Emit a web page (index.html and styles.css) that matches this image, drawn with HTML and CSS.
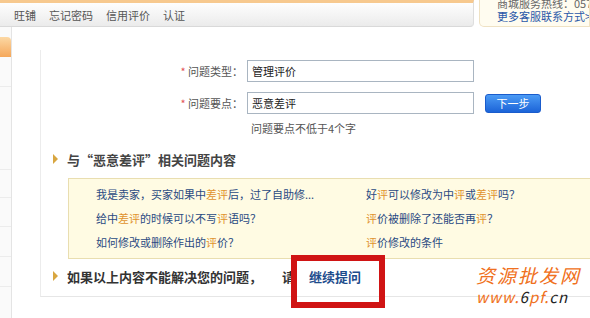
FILE: index.html
```html
<!DOCTYPE html>
<html lang="zh-CN">
<head>
    <meta charset="UTF-8">
    <title>问题提交</title>
    <link rel="stylesheet" href="styles.css">
</head>
<body>
    <div class="top">
        <div class="nav">
            <span>旺铺</span>
            <span>忘记密码</span>
            <span>信用评价</span>
            <span>认证</span>
        </div>
        <div class="service">
            <div class="hotline">商城服务热线：0571</div>
            <a class="more">更多客服联系方式&gt;</a>
        </div>
    </div>

    <div class="wrap">
        <div class="side">
            <div class="tab"></div>
            <div class="side-item h30"></div>
            <div class="side-item h83"></div>
            <div class="side-item h28"></div>
            <div class="side-item h29"></div>
            <div class="side-item h30"></div>
            <div class="side-item h30"></div>
        </div>

        <div class="panel">
            <div class="form">
                <div class="row">
                    <div class="label"><span class="star">*</span> 问题类型：</div>
                    <div class="input">管理评价</div>
                </div>
                <div class="row">
                    <div class="label"><span class="star">*</span> 问题要点：</div>
                    <div class="input">恶意差评</div>
                    <button class="btn">下一步</button>
                </div>
                <div class="hint">问题要点不低于4个字</div>
            </div>

            <div class="title"><i class="arrow"></i>与“恶意差评”相关问题内容</div>

            <div class="faq">
                <a>我是卖家，买家如果中<em>差评</em>后，过了自助修...</a>
                <a>好<em>评</em>可以修改为中<em>评</em>或<em>差评</em>吗？</a>
                <a>给中<em>差评</em>的时候可以不写<em>评</em>语吗？</a>
                <a><em>评</em>价被删除了还能否再<em>评</em>？</a>
                <a>如何修改或删除作出的<em>评</em>价？</a>
                <a><em>评</em>价修改的条件</a>
            </div>

            <div class="title last"><i class="arrow"></i>如果以上内容不能解决您的问题，<span class="please">请</span><a class="ask">继续提问</a></div>
        </div>
    </div>

    <div class="mark"></div>
    <div class="stamp">
        <div class="stamp-cn">资源批发网</div>
        <div class="stamp-url">www.<b>6</b>pf.<b>cn</b></div>
    </div>
</body>
</html>
```

FILE: styles.css
```css
body {
    margin: 0;
    width: 590px;
    height: 318px;
    overflow: hidden;
    position: relative;
    background: #fff;
    font-family: "Noto Sans CJK SC", "Liberation Sans", sans-serif;
    font-size: 11px;
    color: #555;
}

a {
    text-decoration: none;
}

/* top bar */
.top {
    display: flex;
    height: 27px;
}

.nav {
    width: 474px;
    box-sizing: border-box;
    display: flex;
    align-items: center;
    gap: 13px;
    padding-left: 14px;
    border-top: 3px solid #f7c98f;
    border-bottom: 1px solid #d9d9d9;
    border-right: 1px solid #dedede;
    border-bottom-right-radius: 4px;
    background: linear-gradient(#fefefe, #ebebeb);
    font-size: 11px;
    color: #555;
}

.service {
    flex: 1;
    margin-left: 5px;
    padding-left: 17px;
    background: #fffcf0;
    border: 1px solid #efe2c4;
    border-top: none;
    border-bottom-left-radius: 5px;
    line-height: 12px;
    white-space: nowrap;
    overflow: hidden;
}

.hotline {
    margin-top: -3px;
    color: #666;
}

.more {
    display: block;
    margin-top: 1px;
    color: #2a58a8;
}

/* body */
.wrap {
    display: flex;
    height: 291px;
}

.side {
    width: 11px;
    flex: none;
    padding-top: 10px;
    border-right: 1px solid #e4e4e4;
    background: #fafafa;
}

.tab {
    height: 20px;
    border-top-right-radius: 4px;
    background: linear-gradient(#fcd8a4, #f5a75a);
}

.side-item {
    border-bottom: 1px solid #ececec;
    box-sizing: border-box;
}

.h28 { height: 28px; }
.h29 { height: 29px; }
.h30 { height: 30px; }
.h83 { height: 83px; }

.panel {
    flex: none;
    width: 560px;
    height: 247px;
    box-sizing: border-box;
    margin: 23px 0 0 28px;
    border-left: 1px solid #ececec;
    border-bottom: 1px solid #e6e6e6;
}

.form {
    padding-top: 10px;
}

.row {
    display: flex;
    align-items: center;
    height: 22px;
    margin-bottom: 10px;
}

.label {
    width: 73px;
    margin-left: 129px;
    text-align: right;
    color: #555;
}

.star {
    color: #e25555;
}

.input {
    width: 227px;
    height: 22px;
    box-sizing: border-box;
    margin-left: 4px;
    padding-left: 4px;
    display: flex;
    align-items: center;
    border: 1px solid #a9b5c1;
    color: #222;
    background: #fff;
}

.btn {
    width: 56px;
    height: 19px;
    margin-left: 11px;
    padding: 0;
    border: 1px solid #1a5ccc;
    border-radius: 3px;
    background: linear-gradient(#4b9bf5, #1c64d8);
    color: #fff;
    font-family: inherit;
    font-size: 11px;
}

.hint {
    margin: -3px 0 0 210px;
    line-height: 14px;
    color: #555;
}

.title {
    display: flex;
    align-items: center;
    margin-top: 16px;
    height: 16px;
    font-size: 13px;
    font-weight: bold;
    color: #444;
}

.arrow {
    width: 0;
    height: 0;
    margin: 0 9px 0 12px;
    border-top: 5px solid transparent;
    border-bottom: 5px solid transparent;
    border-left: 5px solid #d8a640;
}

.faq {
    margin: 11px 0 0 27px;
    height: 81px;
    box-sizing: border-box;
    padding: 3px 0 0 27px;
    display: grid;
    grid-template-columns: 270px 1fr;
    grid-auto-rows: 24px;
    align-items: center;
    background: #fffbe3;
    border: 1px solid #e9deb0;
    border-right: none;
}

.faq a {
    color: #2a4a82;
    white-space: nowrap;
}

.faq em {
    font-style: normal;
    color: #e0922e;
}

.title.last {
    margin-top: 9px;
    color: #333;
}

.please {
    margin-left: 20px;
}

.ask {
    margin-left: 14px;
    color: #1d4c8c;
}

/* annotation overlays */
.mark {
    position: absolute;
    left: 291px;
    top: 255px;
    width: 82px;
    height: 41px;
    border: 6px solid #d01414;
}

.stamp {
    position: absolute;
    left: 476px;
    top: 262px;
    width: 112px;
    color: #f07020;
    font-style: italic;
    white-space: nowrap;
}

.stamp-cn {
    font-size: 19px;
    line-height: 26px;
    letter-spacing: 2px;
}

.stamp-url {
    font-size: 15px;
    line-height: 18px;
    letter-spacing: 1px;
}

.stamp-url b {
    font-weight: normal;
    color: #222;
}
```
